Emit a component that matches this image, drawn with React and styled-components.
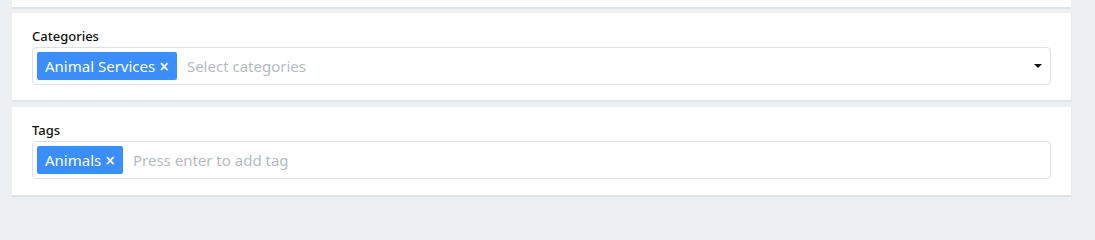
import React from "react";
import styled, { createGlobalStyle } from "styled-components";

const GlobalStyle = createGlobalStyle`
  html, body {
    margin: 0;
    padding: 0;
    background: #edf0f3;
    font-family: "Noto Sans", "Open Sans", Arial, sans-serif;
  }
`;

function App() {
  return (
    <>
      <GlobalStyle />
      <Page>
        <TopCard />
        <Card>
          <Label>Categories</Label>
          <Field>
            <Tag>
              Animal Services<Remove>×</Remove>
            </Tag>
            <Placeholder>Select categories</Placeholder>
            <Caret />
          </Field>
        </Card>
        <Card $last>
          <Label>Tags</Label>
          <Field>
            <Tag>
              Animals<Remove>×</Remove>
            </Tag>
            <Placeholder>Press enter to add tag</Placeholder>
          </Field>
        </Card>
      </Page>
    </>
  );
}

const Page = styled.div`
  width: 1059px;
  padding-left: 12px;
  padding-bottom: 12px;
`;

const TopCard = styled.div`
  height: 7px;
  background: #fff;
  border-bottom: 2px solid #dfe3e8;
  margin-bottom: 4px;
`;

const Card = styled.div`
  background: #fff;
  border-bottom: 2px solid #dfe3e8;
  box-shadow: 1px 0 0 #e6e9ed;
  padding: 14px 20px ${(p) => (p.$last ? "16px" : "15px")};
  margin-bottom: 5px;
`;

const Label = styled.div`
  font-size: 13px;
  line-height: 18px;
  font-weight: 550;
  color: #111;
  margin-bottom: 2px;
`;

const Field = styled.div`
  display: flex;
  align-items: center;
  gap: 10px;
  height: 36px;
  padding: 0 4px;
  border: 1px solid #dde2e8;
  border-radius: 4px;
`;

const Tag = styled.span`
  display: inline-flex;
  align-items: center;
  height: 28px;
  padding: 0 8px;
  background: #3b8eff;
  color: #fff;
  border-radius: 2px;
  font-size: 15px;
  white-space: pre;
`;

const Remove = styled.span`
  font-size: 17px;
  font-weight: 600;
  margin-left: 4px;
  line-height: 1;
`;

const Placeholder = styled.span`
  flex: 1;
  font-size: 15px;
  color: #b6bbc2;
`;

const Caret = styled.span`
  width: 0;
  height: 0;
  margin-right: 4px;
  border-left: 4px solid transparent;
  border-right: 4px solid transparent;
  border-top: 4px solid #111;
`;

export default App;
